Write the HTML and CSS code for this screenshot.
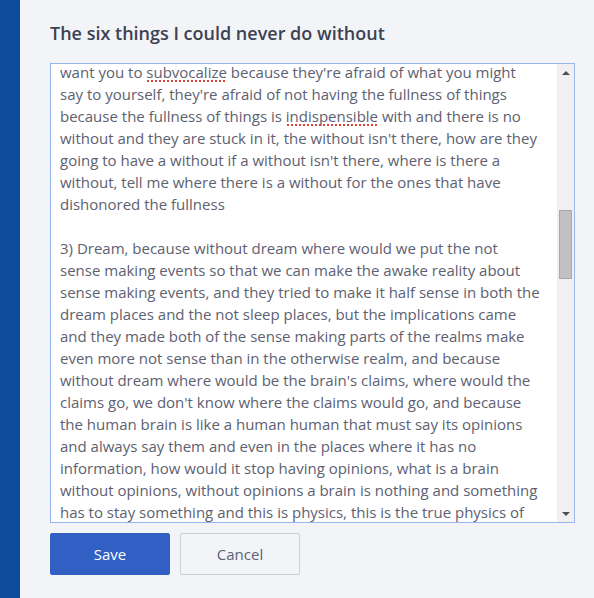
FILE: index.html
```html
<!DOCTYPE html>
<html lang="en">
<head>
<meta charset="utf-8">
<title>Edit answer</title>
<link rel="stylesheet" href="styles.css">
</head>
<body>
<div class="page">
  <aside class="rail"></aside>
  <main class="content">
    <h1 class="title">The six things I could never do without</h1>
    <div class="field">
      <div class="viewport">
        <div class="text">
          <div class="line first">want you to <span class="misspelt">subvocalize</span> because they're afraid of what you might</div>
          <div class="line">say to yourself, they're afraid of not having the fullness of things</div>
          <div class="line">because the fullness of things is <span class="misspelt">indispensible</span> with and there is no</div>
          <div class="line">without and they are stuck in it, the without isn't there, how are they</div>
          <div class="line">going to have a without if a without isn't there, where is there a</div>
          <div class="line">without, tell me where there is a without for the ones that have</div>
          <div class="line">dishonored the fullness</div>
          <div class="line">&nbsp;</div>
          <div class="line">3) Dream, because without dream where would we put the not</div>
          <div class="line">sense making events so that we can make the awake reality about</div>
          <div class="line">sense making events, and they tried to make it half sense in both the</div>
          <div class="line">dream places and the not sleep places, but the implications came</div>
          <div class="line">and they made both of the sense making parts of the realms make</div>
          <div class="line">even more not sense than in the otherwise realm, and because</div>
          <div class="line">without dream where would be the brain's claims, where would the</div>
          <div class="line">claims go, we don't know where the claims would go, and because</div>
          <div class="line">the human brain is like a human human that must say its opinions</div>
          <div class="line">and always say them and even in the places where it has no</div>
          <div class="line">information, how would it stop having opinions, what is a brain</div>
          <div class="line">without opinions, without opinions a brain is nothing and something</div>
          <div class="line">has to stay something and this is physics, this is the true physics of</div>
        </div>
      </div>
      <div class="scrollbar">
        <div class="arrow up"></div>
        <div class="track"><div class="thumb"></div></div>
        <div class="arrow down"></div>
      </div>
    </div>
    <div class="actions">
      <button class="btn btn-primary" type="button">Save</button>
      <button class="btn btn-secondary" type="button">Cancel</button>
    </div>
  </main>
</div>
</body>
</html>
```

FILE: styles.css
```css
* { box-sizing: border-box; }
html, body { margin: 0; padding: 0; }
body {
  background: #f3f4f8;
  font-family: "Open Sans", "Noto Sans", sans-serif;
  height: 598px;
  overflow: hidden;
}
.page {
  display: flex;
  height: 598px;
}
.rail {
  width: 20px;
  flex: 0 0 20px;
  background: #0f4b9d;
}
.content {
  padding: 21px 0 0 30px;
  width: 555px;
}
.title {
  margin: 0;
  font-size: 18px;
  line-height: 24px;
  font-weight: 600;
  color: #3c4251;
  letter-spacing: 0;
}
.field {
  margin-top: 18px;
  width: 525px;
  height: 460px;
  border: 1px solid #98b5ee;
  background: #ffffff;
  display: flex;
}
.viewport {
  flex: 1;
  padding-left: 9px;
}
.text {
  font-size: 15px;
  line-height: 22px;
  color: #5d6171;
}
.line { white-space: nowrap; }
.line.first {
  line-height: 16px;
  margin-bottom: 3px;
}
.misspelt {
  background-image:
    linear-gradient(135deg, transparent 40%, #e0403a 40%, #e0403a 60%, transparent 60%),
    linear-gradient(45deg, transparent 40%, #e0403a 40%, #e0403a 60%, transparent 60%);
  background-size: 4px 2px;
  background-repeat: repeat-x;
  background-position: 0 100%;
}
.scrollbar {
  width: 17px;
  flex: 0 0 17px;
  background: #f0f0f0;
  display: flex;
  flex-direction: column;
}
.arrow {
  height: 17px;
  display: flex;
  align-items: center;
  justify-content: center;
}
.arrow::before {
  content: "";
  width: 0;
  height: 0;
  border-left: 4px solid transparent;
  border-right: 4px solid transparent;
}
.arrow.up::before { border-bottom: 4px solid #505050; }
.arrow.down::before { border-top: 4px solid #505050; }
.track {
  flex: 1;
  padding: 129px 2px 0 2px;
}
.thumb {
  height: 69px;
  background: #c1c1c1;
  border: 1px solid #a9a9a9;
}
.actions {
  margin-top: 10px;
  display: flex;
  gap: 10px;
}
.btn {
  width: 120px;
  height: 42px;
  border-radius: 2px;
  font-family: "Open Sans", "Noto Sans", sans-serif;
  font-size: 15px;
  cursor: pointer;
}
.btn-primary {
  background: #315fc4;
  border: 1px solid #315fc4;
  color: #ffffff;
  font-weight: 500;
}
.btn-secondary {
  background: #f3f4f8;
  border: 1px solid #cdcfd5;
  color: #5b6275;
}
```
